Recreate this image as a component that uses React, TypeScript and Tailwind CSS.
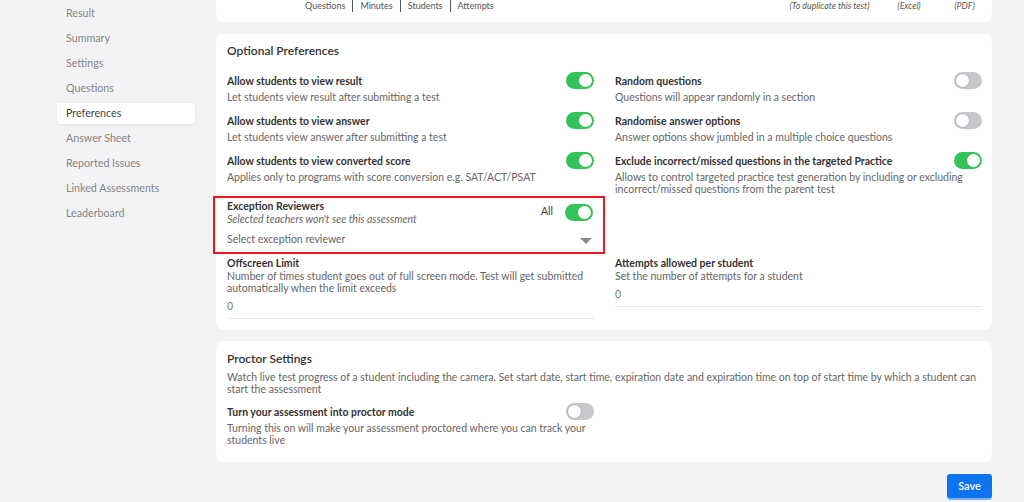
import React from "react";

const Toggle = ({ on }: { on: boolean }) =>
  on ? (
    <div className="w-[28px] h-[17px] rounded-full bg-[#34c35a] flex items-center justify-end px-[2px] shrink-0">
      <div className="w-[13px] h-[13px] rounded-full bg-white" />
    </div>
  ) : (
    <div className="w-[28px] h-[17px] rounded-full bg-[#c8c8cc] flex items-center justify-start px-[2px] shrink-0">
      <div className="w-[13px] h-[13px] rounded-full bg-white shadow-[0_0_0_1px_#b5b5ba]" />
    </div>
  );

const Pref = ({ title, desc, on }: { title: string; desc: string; on: boolean }) => (
  <div>
    <div className="flex items-center justify-between h-[17px]">
      <span className="text-[10.5px] leading-[14px] font-bold text-[#333]">{title}</span>
      <Toggle on={on} />
    </div>
    <p className="mt-[2px] text-[10.5px] leading-[12px] text-[#666]">{desc}</p>
  </div>
);

const sidebar = [
  "Result",
  "Summary",
  "Settings",
  "Questions",
  "Preferences",
  "Answer Sheet",
  "Reported Issues",
  "Linked Assessments",
  "Leaderboard",
];

export default function App() {
  return (
    <div
      className="w-[1024px] h-[502px] overflow-hidden bg-[#f3f3f6] flex"
      style={{ fontFamily: "Lato, 'Liberation Sans', sans-serif" }}
    >
      <aside className="w-[216px] shrink-0 pl-[57px] pr-[21px] pt-[3px] flex flex-col gap-[4px]">
        {sidebar.map((s) => (
          <div
            key={s}
            className={
              "h-[21px] flex items-center pl-[9px] text-[10.7px] rounded-[3px] " +
              (s === "Preferences"
                ? "bg-white text-[#444] shadow-[0_1px_3px_rgba(0,0,0,0.08)]"
                : "text-[#858585]")
            }
          >
            {s}
          </div>
        ))}
      </aside>

      <main className="w-[776px] shrink-0 flex flex-col">
        {/* top card (cut off) */}
        <div className="h-[22px] bg-white rounded-b-[8px] flex items-start">
          <div className="w-[89px]" />
          <div className="flex text-[9px] leading-[12px] text-[#555]">
            <span className="pr-[7px]">Questions</span>
            <span className="px-[7px] border-l border-[#555]">Minutes</span>
            <span className="px-[7px] border-l border-[#555]">Students</span>
            <span className="pl-[7px] border-l border-[#555]">Attempts</span>
          </div>
          <div className="flex-1" />
          <div className="flex text-[8.8px] leading-[12px] italic text-[#555] pr-[7.5px]">
            <span className="w-[100px] text-center">(To duplicate this test)</span>
            <span className="w-[50px] text-center ml-[4.5px]">(Excel)</span>
            <span className="w-[40px] text-center ml-[10.5px]">(PDF)</span>
          </div>
        </div>

        {/* Optional preferences */}
        <section className="mt-[12px] bg-white rounded-[8px] pt-[9px] pb-[11px] pl-[11px] pr-[10px]">
          <h2 className="text-[12px] leading-[16px] font-semibold text-[#333]">Optional Preferences</h2>
          <div className="mt-[13px] grid grid-cols-2 gap-x-[21px] gap-y-[9px]">
            <Pref on title="Allow students to view result" desc="Let students view result after submitting a test" />
            <Pref on={false} title="Random questions" desc="Questions will appear randomly in a section" />
            <Pref on title="Allow students to view answer" desc="Let students view answer after submitting a test" />
            <Pref on={false} title="Randomise answer options" desc="Answer options show jumbled in a multiple choice questions" />
            <Pref
              on
              title="Allow students to view converted score"
              desc="Applies only to programs with score conversion e.g. SAT/ACT/PSAT"
            />
            <Pref
              on
              title="Exclude incorrect/missed questions in the targeted Practice"
              desc="Allows to control targeted practice test generation by including or excluding incorrect/missed questions from the parent test"
            />
          </div>

          <div className="grid grid-cols-2 gap-x-[21px] mt-[1px]">
            <div className="-ml-[14px] -mr-[11px] border-2 border-[#f0141e] pt-[1px] pb-[5px] pl-[12px] pr-[10px]">
              <div className="flex items-center justify-between">
                <div>
                  <div className="text-[10.5px] leading-[14px] font-bold text-[#333]">Exception Reviewers</div>
                  <div className="text-[10.5px] leading-[12px] italic text-[#666]">
                    Selected teachers won't see this assessment
                  </div>
                </div>
                <div className="flex items-center gap-[12px]">
                  <span className="text-[10.5px] text-[#444]">All</span>
                  <Toggle on />
                </div>
              </div>
              <div className="mt-[8px] flex items-center justify-between h-[14px]">
                <span className="text-[10.5px] text-[#666]">Select exception reviewer</span>
                <svg width="12" height="7" viewBox="0 0 12 7" className="mr-[1px] mt-[2px]">
                  <path d="M0 0 L12 0 L6 6 Z" fill="#8a8a8a" />
                </svg>
              </div>
            </div>
            <div />
          </div>

          <div className="grid grid-cols-2 gap-x-[21px] mt-[2px] items-start">
            <div className="border-b border-[#e6e6ea] pb-[6px]">
              <div className="text-[10.5px] leading-[14px] font-bold text-[#333]">Offscreen Limit</div>
              <p className="text-[10.5px] leading-[12px] text-[#666]">
                Number of times student goes out of full screen mode. Test will get submitted automatically when the
                limit exceeds
              </p>
              <div className="mt-[6px] text-[10.5px] leading-[12px] text-[#777]">0</div>
            </div>
            <div className="border-b border-[#e6e6ea] pb-[6px]">
              <div className="text-[10.5px] leading-[14px] font-bold text-[#333]">Attempts allowed per student</div>
              <p className="text-[10.5px] leading-[12px] text-[#666]">Set the number of attempts for a student</p>
              <div className="mt-[6px] text-[10.5px] leading-[12px] text-[#777]">0</div>
            </div>
          </div>
        </section>

        {/* Proctor settings */}
        <section className="mt-[11px] bg-white rounded-[8px] pt-[10px] pb-[16px] pl-[11px] pr-[10px]">
          <h2 className="text-[12px] leading-[16px] font-semibold text-[#333]">Proctor Settings</h2>
          <p className="mt-[4px] text-[10.5px] leading-[12px] text-[#666]">
            Watch live test progress of a student including the camera. Set start date, start time, expiration date
            and expiration time on top of start time by which a student can start the assessment
          </p>
          <div className="mt-[8px] grid grid-cols-2 gap-x-[21px]">
            <Pref
              on={false}
              title="Turn your assessment into proctor mode"
              desc="Turning this on will make your assessment proctored where you can track your students live"
            />
          </div>
        </section>

        <div className="mt-[12px] flex justify-end">
          <button className="w-[45px] h-[24px] rounded-[3px] bg-[#0b74ee] text-white text-[11px] font-semibold shadow-[0_2px_0_#7fb2f0]">
            Save
          </button>
        </div>
      </main>
    </div>
  );
}
